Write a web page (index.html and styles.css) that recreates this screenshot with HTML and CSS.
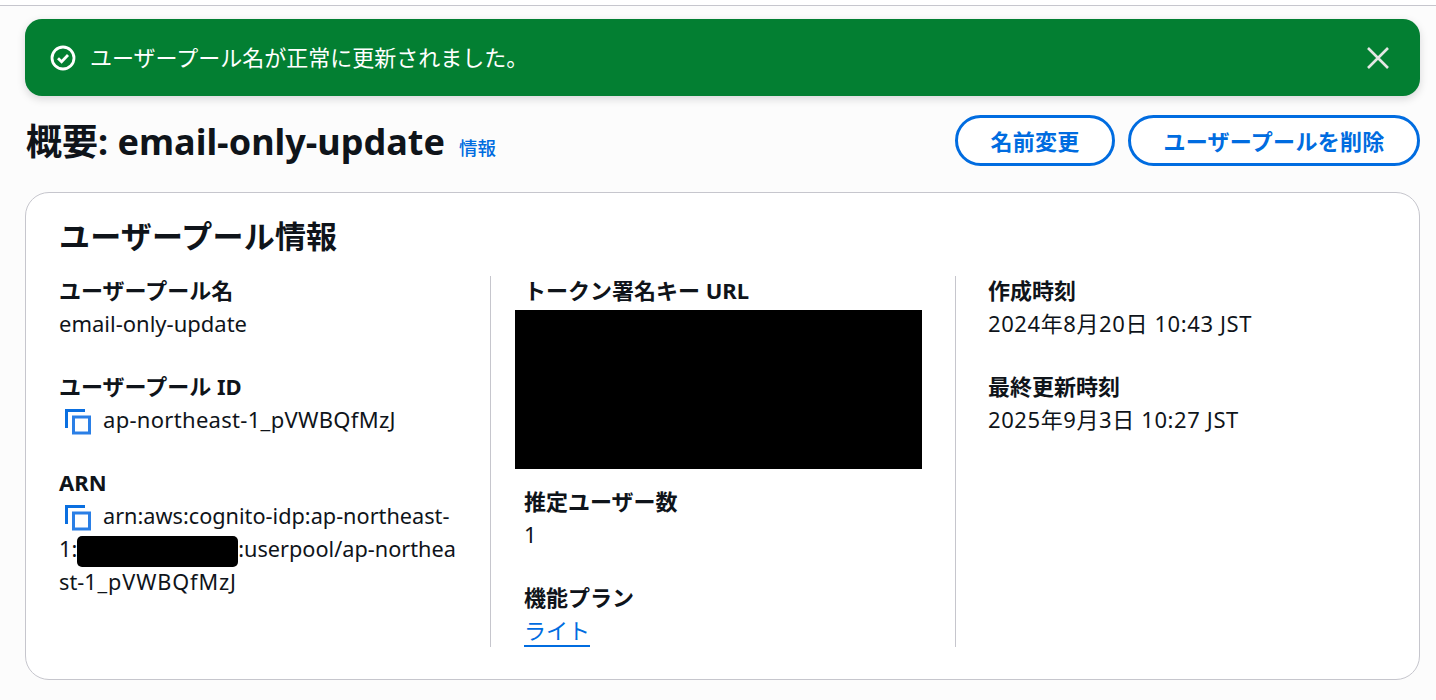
FILE: index.html
```html
<!DOCTYPE html>
<html lang="ja">
<head>
  <title>概要: email-only-update</title>
  <link rel="stylesheet" href="styles.css">
</head>
<body>
  <div class="top-bar"></div>
  <div class="page">
    <div class="flash">
      <svg class="flash-icon" viewBox="0 0 26 26">
        <circle cx="13" cy="13" r="11" fill="none" stroke="#fff" stroke-width="2.8"/>
        <path d="M8 13.2l3.6 3.6 6.4-6.8" fill="none" stroke="#fff" stroke-width="2.8"/>
      </svg>
      <span class="flash-text">ユーザープール名が正常に更新されました。</span>
      <svg class="flash-close" viewBox="0 0 22 22">
        <path d="M1 1l20 20M21 1L1 21" fill="none" stroke="#e4e7e4" stroke-width="2.6"/>
      </svg>
    </div>

    <div class="page-header">
      <div class="title-wrap">
        <h1>概要: email-only-update</h1>
        <a class="info-link" href="#">情報</a>
      </div>
      <div class="actions">
        <button class="btn btn-rename">名前変更</button>
        <button class="btn btn-delete">ユーザープールを削除</button>
      </div>
    </div>

    <div class="card">
      <h2>ユーザープール情報</h2>
      <div class="columns">
        <div class="col">
          <div class="item">
            <div class="label">ユーザープール名</div>
            <div class="value">email-only-update</div>
          </div>
          <div class="item">
            <div class="label">ユーザープール ID</div>
            <div class="value value-id">
              <svg class="copy-icon" viewBox="0 0 26 26"><path d="M1.5 19V1.5H20" fill="none" stroke="#0a6fe0" stroke-width="3"/><rect x="8.5" y="8" width="16" height="16" fill="none" stroke="#2a7fe6" stroke-width="3"/></svg>ap-northeast-1_pVWBQfMzJ
            </div>
          </div>
          <div class="item">
            <div class="label">ARN</div>
            <div class="value arn">
              <svg class="copy-icon" viewBox="0 0 26 26"><path d="M1.5 19V1.5H20" fill="none" stroke="#0a6fe0" stroke-width="3"/><rect x="8.5" y="8" width="16" height="16" fill="none" stroke="#2a7fe6" stroke-width="3"/></svg>arn:aws:cognito-idp:ap-northeast-1:<span class="redact-inline"></span>:userpool/ap-northeast-<span class="arn-tail">1_pVWBQfMzJ</span>
            </div>
          </div>
        </div>

        <div class="col col-middle">
          <div class="item item-url">
            <div class="label">トークン署名キー URL</div>
            <div class="redact-block"></div>
          </div>
          <div class="item">
            <div class="label">推定ユーザー数</div>
            <div class="value">1</div>
          </div>
          <div class="item">
            <div class="label">機能プラン</div>
            <div class="value"><a class="plan-link" href="#">ライト</a></div>
          </div>
        </div>

        <div class="col">
          <div class="item">
            <div class="label">作成時刻</div>
            <div class="value value-date">2024年8月20日 10:43 JST</div>
          </div>
          <div class="item">
            <div class="label">最終更新時刻</div>
            <div class="value value-date">2025年9月3日 10:27 JST</div>
          </div>
        </div>
      </div>
    </div>
  </div>
</body>
</html>
```

FILE: styles.css
```css
* {
  box-sizing: border-box;
}

body {
  margin: 0;
  height: 700px;
  overflow: hidden;
  background: #fcfcfc;
  color: #0f141a;
  font-family: "Noto Sans", "Noto Sans CJK JP", sans-serif;
  font-size: 22px;
}

.top-bar {
  height: 6px;
  background: #fff;
  border-bottom: 1px solid #c6c6cd;
}

.page {
  padding: 13px 16px 0 25px;
}

.flash {
  display: flex;
  align-items: center;
  height: 77px;
  padding: 0 31px 0 25px;
  border-radius: 17px;
  background: #037f32;
  color: #fff;
  box-shadow: 0 3px 8px rgba(0, 7, 22, 0.15);
}

.flash-icon {
  width: 26px;
  height: 26px;
  margin-right: 14px;
}

.flash-text {
  flex: 1;
  padding-bottom: 4px;
  font-size: 22px;
}

.flash-close {
  width: 22px;
  height: 22px;
}

.page-header {
  display: flex;
  justify-content: space-between;
  align-items: flex-start;
  height: 96px;
  padding-top: 19px;
}

.title-wrap {
  display: flex;
  align-items: baseline;
  margin-top: -1px;
  padding-left: 1px;
}

h1 {
  margin: 0;
  font-size: 36px;
  font-weight: 700;
  line-height: 56px;
}

.info-link {
  margin-left: 14px;
  color: #006ce0;
  font-size: 18.5px;
  font-weight: 500;
  text-decoration: none;
}

.actions {
  display: flex;
  gap: 13px;
}

.btn {
  height: 51px;
  padding: 0 0 2px;
  border: 3px solid #006ce0;
  border-radius: 26px;
  background: #fff;
  color: #006ce0;
  font-family: inherit;
  font-size: 22px;
  letter-spacing: 0.3px;
  font-weight: 700;
}

.btn-rename {
  width: 160px;
}

.btn-delete {
  width: 292px;
}

.card {
  height: 488px;
  padding: 21px 33px 0;
  border: 1px solid #c6c6cd;
  border-radius: 24px;
  background: #fff;
}

h2 {
  margin: 0 0 18px;
  font-size: 31px;
  letter-spacing: 0.2px;
  font-weight: 700;
  line-height: 44px;
}

.columns {
  display: grid;
  grid-template-columns: 431px 465px 1fr;
  grid-template-rows: 371px;
}

.col + .col {
  padding-left: 32px;
  border-left: 1px solid #c6c6cd;
}

.col:first-child {
  padding-right: 30px;
}

.col + .col-middle {
  padding-left: 33px;
}

.item {
  margin-bottom: 32px;
}

.item:last-child {
  margin-bottom: 0;
}

.item-url {
  margin-bottom: 18px;
}

.label {
  margin-bottom: 3px;
  font-size: 22px;
  font-weight: 700;
  line-height: 28px;
}

.value {
  font-size: 22px;
  line-height: 33px;
}

.value-id {
  letter-spacing: 0.3px;
}

.value-date {
  letter-spacing: 0.6px;
}

.arn {
  font-size: 21.7px;
  word-break: break-all;
}

.arn-tail {
  letter-spacing: 0.9px;
}

.copy-icon {
  display: inline-block;
  width: 26px;
  height: 26px;
  margin: -4px 12px -4px 6px;
  vertical-align: -3px;
}

.redact-inline {
  display: inline-block;
  width: 161px;
  height: 31px;
  margin: -4px 0;
  border-radius: 5px;
  background: #000;
  vertical-align: middle;
}

.redact-block {
  width: 407px;
  height: 159px;
  margin-left: -9px;
  margin-top: 6px;
  background: #000;
}

.plan-link {
  color: #006ce0;
  text-decoration: none;
  border-bottom: 2px solid #006ce0;
}
```
